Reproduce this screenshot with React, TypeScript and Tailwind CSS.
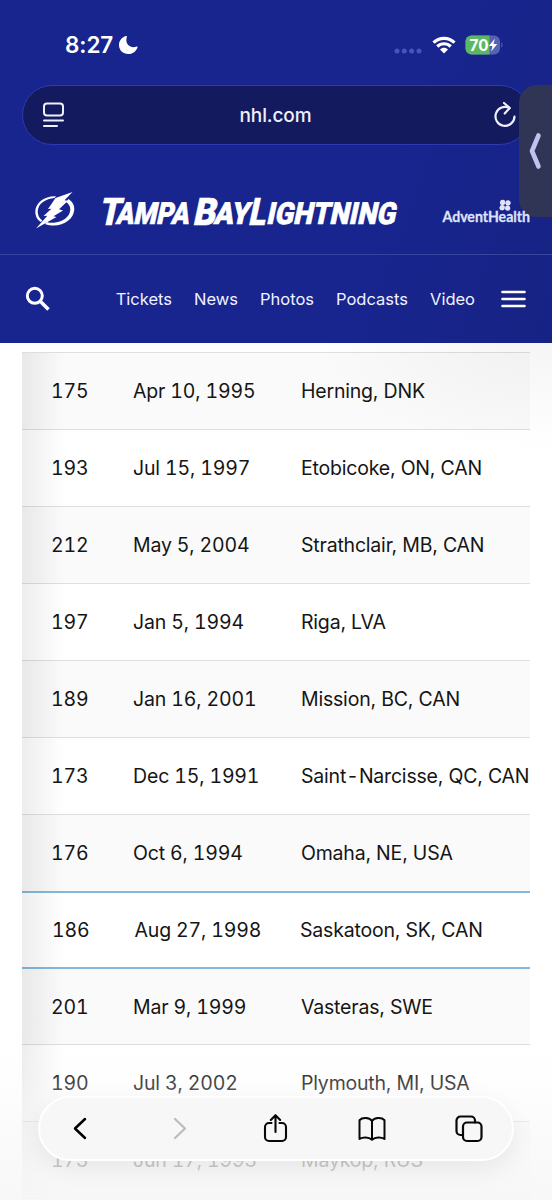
import React from "react";

type Player = { weight: string; born: string; place: string; active?: boolean };

const players: Player[] = [
  { weight: "175", born: "Apr 10, 1995", place: "Herning, DNK" },
  { weight: "193", born: "Jul 15, 1997", place: "Etobicoke, ON, CAN" },
  { weight: "212", born: "May 5, 2004", place: "Strathclair, MB, CAN" },
  { weight: "197", born: "Jan 5, 1994", place: "Riga, LVA" },
  { weight: "189", born: "Jan 16, 2001", place: "Mission, BC, CAN" },
  { weight: "173", born: "Dec 15, 1991", place: "Saint-Narcisse, QC, CAN" },
  { weight: "176", born: "Oct 6, 1994", place: "Omaha, NE, USA" },
  { weight: "186", born: "Aug 27, 1998", place: "Saskatoon, SK, CAN", active: true },
  { weight: "201", born: "Mar 9, 1999", place: "Vasteras, SWE" },
  { weight: "190", born: "Jul 3, 2002", place: "Plymouth, MI, USA" },
  { weight: "173", born: "Jun 17, 1993", place: "Maykop, RUS" },
];

function StatusBar() {
  return (
    <div className="flex h-[85px] shrink-0 items-center pt-[5px] pr-[49px] pl-[65px] text-white">
      <span className="pt-px text-[22.5px] leading-none font-semibold tracking-[-0.1px]">8:27</span>
      <svg className="ml-[5px]" width="21" height="20" viewBox="0 0 21 20">
        <path d="M8 1C3.5 2.4 1 5.800 1 10c0 5.200 4 9 9.200 9 4.200 0 7.700-2.400 9.300-6.600.2-.6-.3-1-.9-.8C12.500 14 6.400 9 8.900 1.800c.2-.6-.3-1-.9-.8z" fill="currentColor" />
      </svg>
      <svg className="mt-[12px] ml-auto" width="28" height="6" viewBox="0 0 28 6" fill="#4854b8">
        <circle cx="3" cy="3" r="2.500" />
        <circle cx="10.300" cy="3" r="2.500" />
        <circle cx="17.600" cy="3" r="2.500" />
        <circle cx="25" cy="3" r="2.500" />
      </svg>
      <svg className="ml-[10px]" width="24" height="18" viewBox="0 0 24 18" fill="none" stroke="currentColor" strokeWidth="3.200">
        <path d="M1.500 6.600C7.300.9 16.700.9 22.500 6.600" />
        <path d="M5.300 10.500c3.700-3.700 9.700-3.700 13.400 0" />
        <path d="M8 13.500c2.200-2.200 5.800-2.200 8 0l-4 4z" fill="currentColor" stroke="none" />
      </svg>
      <svg className="ml-[9px]" width="38" height="20" viewBox="0 0 38 20">
        <defs>
          <clipPath id="cell"><rect x="0.500" y="0.500" width="34.500" height="19" rx="6" /></clipPath>
        </defs>
        <g clipPath="url(#cell)">
          <rect width="36" height="20" fill="#5762b4" />
          <rect width="24.500" height="20" fill="#5cb860" />
        </g>
        <path d="M36.300 7.200c1.600.8 1.600 4.800 0 5.600z" fill="#5762b4" />
        <text x="4.500" y="15.700" fontSize="15.500" fontWeight="700" fill="#fff" textLength="19" lengthAdjust="spacingAndGlyphs">70</text>
        <path d="M29.800 3.800l-6 7.200h3.700l-1.300 5.400 6-7.300h-3.700z" fill="#fff" />
      </svg>
    </div>
  );
}

function AddressBar() {
  return (
    <div className="mx-[22px] flex h-[60px] shrink-0 items-center rounded-full border border-[#2c3bb0] bg-[#131b5e] pr-[12px] pl-[19px] text-[#eef0fc]">
      <svg width="24" height="28" viewBox="0 0 24 28" fill="none" stroke="currentColor" strokeWidth="2" strokeLinecap="round">
        <rect x="2" y="2.500" width="19" height="12" rx="3" />
        <path d="M2 19.500h19M2 25h13" />
      </svg>
      <span className="flex-1 pt-px pr-[8px] text-center text-[19px] leading-none font-medium tracking-[-0.1px]">nhl.com</span>
      <svg width="24" height="28" viewBox="0 0 24 28" fill="none" stroke="currentColor" strokeWidth="2.200" strokeLinecap="round" strokeLinejoin="round">
        <path d="M21.500 15.500A9.500 9.500 0 1 1 16.500 7" />
        <path d="M11 2l5.700 5-5 5.500" />
      </svg>
    </div>
  );
}

function TeamMark() {
  return (
    <svg width="42" height="40" viewBox="0 0 42 40" fill="#fff">
      <path d="M22 5.200C11.500 4.500 1.500 11 1.300 20.500c0 5 2.200 8.600 5.700 10.500l1.300-1.500C5.500 27.500 3.700 24.500 3.700 20.500 3.900 12.500 12 7.500 20.500 7zM34.500 8c3.400 2.300 6 5.800 5.800 10.300C40 28 29.500 35.500 17.500 34.500c-2.500-.2-4.700-.7-6.500-1.500l2-2c2 .7 4 1 6.500.8C28.500 31.200 36 26 36.300 18.500c.1-3-1.600-5.800-4.300-7.500z" />
      <path d="M38.500 1L21.500 7 14 18l3.500-.3L9.500 25l3.800-.3L2 37.500 22.500 26l-3-.8 9.500-5.700-4-1.200L34 9.800l-3.500-.5z" />
    </svg>
  );
}

function Wordmark() {
  return (
    <svg className="ml-[24px] overflow-visible" width="300" height="34" viewBox="0 0 300 34">
      <g transform="translate(7.500 0) skewX(-12)" fill="#fff" stroke="#fff" strokeWidth="0.700" fontFamily="Roboto, 'Liberation Sans', sans-serif" fontWeight="900">
        <text x="-2.500" y="31.300" fontSize="38" textLength="21" lengthAdjust="spacingAndGlyphs">T</text>
        <text x="14" y="29.600" fontSize="30.500" textLength="73" lengthAdjust="spacingAndGlyphs">AMPA</text>
        <text x="91.500" y="31.300" fontSize="38" textLength="22.500" lengthAdjust="spacingAndGlyphs">B</text>
        <text x="112" y="29.600" fontSize="30.500" textLength="35" lengthAdjust="spacingAndGlyphs">AY</text>
        <text x="147" y="31.300" fontSize="38" textLength="17" lengthAdjust="spacingAndGlyphs">L</text>
        <text x="164.500" y="29.600" fontSize="30.500" textLength="129" lengthAdjust="spacingAndGlyphs">IGHTNING</text>
      </g>
    </svg>
  );
}

function SponsorMark() {
  return (
    <svg className="relative z-10 ml-auto overflow-visible" width="90" height="28" viewBox="0 0 90 28" fill="#dfe2fa">
      <g transform="rotate(5 64 6)">
        <circle cx="61.600" cy="5.700" r="2.700" />
        <circle cx="67" cy="5.700" r="2.700" />
        <circle cx="61.600" cy="10.900" r="2.700" />
        <circle cx="67" cy="10.900" r="2.700" />
      </g>
      <text x="1.500" y="25" fontSize="15" fontFamily="Lato, sans-serif" fontWeight="700" stroke="#dfe2fa" strokeWidth="0.300" textLength="87.500" lengthAdjust="spacingAndGlyphs">AdventHealth</text>
    </svg>
  );
}

function SiteHeader() {
  return (
    <header className="flex h-[343px] flex-col bg-[#18258f] bg-[linear-gradient(110deg,transparent_65%,rgba(20,30,110,0.35)_100%)]">
      <StatusBar />
      <AddressBar />
      <div className="flex h-[110px] shrink-0 items-center border-b border-[#38459f] pt-[23px] pr-[21px] pl-[34px]">
        <TeamMark />
        <Wordmark />
        <SponsorMark />
      </div>
      <nav className="flex flex-1 items-center pr-[26px] pl-[25px] text-[16.5px] leading-none text-[#f1f2ff]">
        <svg width="26" height="26" viewBox="0 0 26 26" fill="none" stroke="#fff" strokeWidth="3">
          <circle cx="9.800" cy="9.800" r="7.500" />
          <path d="M15 15l8.500 8.500" strokeWidth="3.600" />
        </svg>
        <div className="ml-auto flex gap-[22px]">
          <a>Tickets</a>
          <a>News</a>
          <a>Photos</a>
          <a>Podcasts</a>
          <a>Video</a>
        </div>
        <svg className="ml-[26px]" width="25" height="18" viewBox="0 0 25 18" stroke="#fff" strokeWidth="2.600" strokeLinecap="round">
          <path d="M1.500 2h22M1.500 9h22M1.500 16h22" />
        </svg>
      </nav>
    </header>
  );
}

function rowStyle(i: number) {
  if (i === 6) return "h-[78px] border-b-2 border-[#83b9dc] bg-[#fafafa]";
  if (i === 7) return "h-[76px] border-b-2 border-[#83b9dc] bg-white";
  if (i === 8) return "h-[76px] border-b border-[#dedede] bg-[#fafafa]";
  return i % 2 === 0 ? "h-[77px] border-b border-[#dedede] bg-[#fafafa]" : "h-[77px] border-b border-[#dedede] bg-white";
}

function Place({ name }: { name: string }) {
  const [first, second] = name.split("-");
  if (!second) return <>{name}</>;
  return (
    <>
      {first}
      <span className="mx-[2px]">-</span>
      {second}
    </>
  );
}

function Roster() {
  return (
    <section className="relative mx-[22px] mt-[9px] overflow-hidden border-t border-[#dedede]">
      {players.map((p, i) => (
        <div
          key={i}
          className={
            "grid grid-cols-[111px_168px_1fr] items-center pt-[2px] text-[19.5px] leading-none whitespace-nowrap text-[#151515] " +
            rowStyle(i)
          }
        >
          <span className={p.active ? "pl-[30px] tracking-[-0.15px] tabular-nums" : "pl-[29px] tracking-[-0.15px] tabular-nums"}>{p.weight}</span>
          <span className={p.active ? "pl-[1.5px] tracking-[-0.15px] tabular-nums" : "tracking-[-0.15px] tabular-nums"}>{p.born}</span>
          <span className={p.active ? "-ml-px tracking-[-0.2px]" : "tracking-[-0.2px]"}><Place name={p.place} /></span>
        </div>
      ))}
      <div className="absolute inset-y-0 left-0 w-[42px] bg-linear-to-r from-black/7 to-transparent" />
    </section>
  );
}

function BrowserToolbar() {
  return (
    <div className="absolute bottom-[39px] left-[38px] flex h-[65px] w-[476px] items-center rounded-full border-2 border-white bg-[#f7f7f7] shadow-[0_8px_24px_rgba(0,0,0,0.07)]">
      <svg className="ml-[33px]" width="14" height="23" viewBox="0 0 14 23" fill="none" stroke="#000" strokeWidth="2.500" strokeLinecap="round" strokeLinejoin="round"><path d="M12 2L2 11.500l10 9.500" /></svg>
      <svg className="ml-[86px]" width="14" height="23" viewBox="0 0 14 23" fill="none" stroke="#bcbcbc" strokeWidth="2.300" strokeLinecap="round" strokeLinejoin="round"><path d="M2 2l10 9.500L2 21" /></svg>
      <svg className="mb-[2px] ml-[76px]" width="25" height="30" viewBox="0 0 25 30" fill="none" stroke="#080808" strokeWidth="2.100" strokeLinecap="round" strokeLinejoin="round">
        <path d="M8.500 10H6a4 4 0 0 0-4 4v10a4 4 0 0 0 4 4h13a4 4 0 0 0 4-4V14a4 4 0 0 0-4-4h-2.500M12.500 19V2.500M7.800 7l4.700-4.800L17.200 7" />
      </svg>
      <svg className="ml-[69px]" width="30" height="26" viewBox="0 0 30 26" fill="none" stroke="#080808" strokeWidth="2" strokeLinecap="round" strokeLinejoin="round">
        <path d="M15 5c-2.500-3.500-9.500-4-12.500-.8V23c3.500-2 9-2 12.500.8 3.500-2.800 9-2.800 12.500-.8V4.200C24.500 1 17.500 1.500 15 5zM15 5v18.500" />
      </svg>
      <svg className="ml-[68px]" width="28" height="28" viewBox="0 0 28 28" fill="none" stroke="#080808" strokeWidth="2.200" strokeLinecap="round" strokeLinejoin="round">
        <rect x="8" y="7.500" width="18.500" height="18.500" rx="4" />
        <path d="M8 20H5.500a4 4 0 0 1-4-4V5.500a4 4 0 0 1 4-4H16a4 4 0 0 1 4 4v2" />
      </svg>
    </div>
  );
}

export default function App() {
  return (
    <div className="relative h-[1200px] w-[552px] overflow-hidden bg-white font-['Inter','Liberation_Sans',sans-serif]">
      <SiteHeader />
      <Roster />
      <div className="absolute top-[343px] right-0 h-[110px] w-[240px] bg-[radial-gradient(ellipse_at_top_right,rgba(0,0,0,0.04),transparent_70%)]" />
      <div className="absolute bottom-0 left-0 h-[170px] w-full bg-[linear-gradient(to_bottom,rgba(250,250,250,0),rgba(249,249,249,0.12)_25%,rgba(248,248,248,0.7)_66%,rgba(247,247,247,0.9)_100%)]" />
      <BrowserToolbar />
      <div className="absolute top-[85px] right-0 flex h-[132px] w-[33px] items-center justify-center rounded-l-[18px] bg-[#303556]">
        <svg width="14" height="38" viewBox="0 0 14 38" fill="none" stroke="#bfc4ee" strokeWidth="4.600" strokeLinecap="round" strokeLinejoin="round"><path d="M9.500 3.500L3 19l6.500 15.500" /></svg>
      </div>
    </div>
  );
}
